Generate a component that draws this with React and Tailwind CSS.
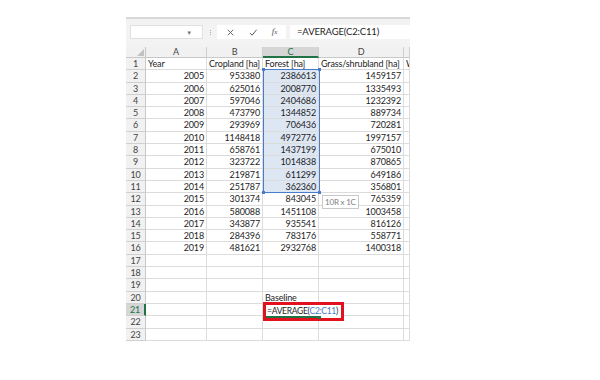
const rows = [
  ["2005", "953380", "2386613", "1459157"],
  ["2006", "625016", "2008770", "1335493"],
  ["2007", "597046", "2404686", "1232392"],
  ["2008", "473790", "1344852", "889734"],
  ["2009", "293969", "706436", "720281"],
  ["2010", "1148418", "4972776", "1997157"],
  ["2011", "658761", "1437199", "675010"],
  ["2012", "323722", "1014838", "870865"],
  ["2013", "219871", "611299", "649186"],
  ["2014", "251787", "362360", "356801"],
  ["2015", "301374", "843045", "765359"],
  ["2016", "580088", "1451108", "1003458"],
  ["2017", "343877", "935541", "816126"],
  ["2018", "284396", "783176", "558771"],
  ["2019", "481621", "2932768", "1400318"],
];

const cols = ["A", "B", "C", "D", ""];

function Cell({ children, right, selected }) {
  return (
    <div
      className={`h-[12.3px] border-r border-b border-[#dcdcdc] px-[2px] leading-[12px] whitespace-nowrap overflow-hidden text-[#1e1e1e] ${
        right ? "text-right" : "text-left"
      } ${selected ? "bg-[#dde6f3]" : "bg-white"}`}
    >
      {children}
    </div>
  );
}

function RowHead({ n, active }) {
  return (
    <div
      className={`h-[12.3px] border-b border-[#d0d0d0] text-center leading-[12px] ${
        active
          ? "bg-[#d6d6d6] text-[#217346] border-r-2 border-r-[#217346]"
          : "bg-[#f1f1f1] text-[#444] border-r border-r-[#c8c8c8]"
      }`}
    >
      {n}
    </div>
  );
}

export default function App() {
  const grid = [];
  grid.push(["Year", "Cropland [ha]", "Forest [ha]", "Grass/shrubland [ha]", "W"]);
  rows.forEach((r) => grid.push([...r, ""]));
  for (let i = 17; i <= 23; i++) grid.push(["", "", i === 20 ? "Baseline" : "", "", ""]);

  return (
    <div
      className="min-h-screen bg-white"
      style={{ fontFamily: "Lato, 'Open Sans', sans-serif" }}
    >
      <div className="pl-[126px] pt-[17px]">
        <div className="w-[284px] overflow-hidden text-[9px] tracking-[-0.15px]">
          {/* formula bar */}
          <div className="h-[30px] bg-[#f3f3f3] border-t-2 border-[#d8d8d8] flex items-start pt-[6px] pl-[4px] gap-[4px]">
            <div className="w-[73px] h-[14px] bg-white border border-[#e0e0e0] flex items-center justify-end pr-[10px]">
              <span className="text-[6px] text-[#777]">▼</span>
            </div>
            <div className="w-[6px] h-[14px] flex flex-col items-center justify-center gap-[1px]">
              <span className="w-[1px] h-[1px] bg-[#aaa]" />
              <span className="w-[1px] h-[1px] bg-[#aaa]" />
              <span className="w-[1px] h-[1px] bg-[#aaa]" />
            </div>
            <div className="w-[69px] h-[14px] bg-white flex items-center justify-around px-[2px]">
              <svg width="9" height="9" viewBox="0 0 10 10">
                <path d="M2 2 L8 8 M8 2 L2 8" stroke="#555" strokeWidth="1" />
              </svg>
              <svg width="10" height="9" viewBox="0 0 10 10">
                <path d="M1.5 5.5 L4 8 L9 2" stroke="#555" strokeWidth="1.1" fill="none" />
              </svg>
              <span className="italic text-[9px] text-[#555]" style={{ fontFamily: "'Liberation Serif', serif" }}>
                f<span className="text-[7px]">x</span>
              </span>
            </div>
            <div className="flex-1 h-[14px] bg-white flex items-center pl-[7px] text-[#1e1e1e] text-[9.5px]">
              =AVERAGE(C2:C11)
            </div>
          </div>

          {/* sheet */}
          <div className="relative">
            <div className="grid grid-cols-[20px_61px_56px_56px_85px_6px]">
              {/* header row */}
              <div className="h-[11px] bg-[#f1f1f1] border-r border-b border-[#c8c8c8] flex items-end justify-end p-[1px]">
                <div className="w-0 h-0 border-l-[7px] border-l-transparent border-b-[7px] border-b-[#c2c2c2]" />
              </div>
              {cols.map((c) => (
                <div
                  key={c || "e"}
                  className={`h-[11px] text-center leading-[10px] border-r border-[#d0d0d0] ${
                    c === "C"
                      ? "bg-[#d6d6d6] text-[#217346] border-b-2 border-b-[#217346]"
                      : "bg-[#f1f1f1] text-[#444] border-b border-b-[#c8c8c8]"
                  }`}
                >
                  {c}
                </div>
              ))}

              {grid.map((r, i) => {
                const n = i + 1;
                return [
                  <RowHead key={`h${n}`} n={n} active={n === 21} />,
                  ...r.map((v, j) => (
                    <Cell
                      key={`${n}-${j}`}
                      right={n >= 2 && n <= 16}
                      selected={j === 2 && n >= 2 && n <= 11}
                    >
                      {v}
                    </Cell>
                  )),
                ];
              })}
            </div>

            {/* selection C2:C11 */}
            <div className="absolute left-[137px] top-[22.3px] w-[57px] h-[124px] border border-[#4a7bc8] pointer-events-none">
              <span className="absolute -left-[2px] -top-[2px] w-[3px] h-[3px] bg-[#4a7bc8]" />
              <span className="absolute -right-[2px] -top-[2px] w-[3px] h-[3px] bg-[#4a7bc8]" />
              <span className="absolute -left-[2px] -bottom-[2px] w-[3px] h-[3px] bg-[#4a7bc8]" />
              <span className="absolute -right-[2px] -bottom-[2px] w-[3px] h-[3px] bg-[#4a7bc8]" />
            </div>

            {/* size tooltip */}
            <div className="absolute left-[196px] top-[148px] h-[14px] px-[2px] bg-white border border-[#c8c8c8] text-[#808080] leading-[12px] text-[8px] tracking-[-0.2px]">
              10R x 1C
            </div>

            {/* edited cell C21 */}
            <div className="absolute left-[137px] top-[255px] w-[81px] h-[19px] border-[3px] border-[#e3101d] bg-white flex items-center pl-[1px] whitespace-nowrap leading-[11px] text-[8.5px] tracking-[-0.3px]">
              <span className="text-[#1e1e1e]">=AVERAGE(</span>
              <span className="text-[#4a7bc8]">C2:C11</span>
              <span className="text-[#1e1e1e]">)</span>
              <span className="absolute left-0 bottom-0 w-[53px] h-[2px] bg-[#217346]" />
              <span className="absolute left-[52px] -bottom-[1px] w-[3px] h-[3px] bg-[#217346]" />
            </div>
          </div>
        </div>
      </div>
    </div>
  );
}
